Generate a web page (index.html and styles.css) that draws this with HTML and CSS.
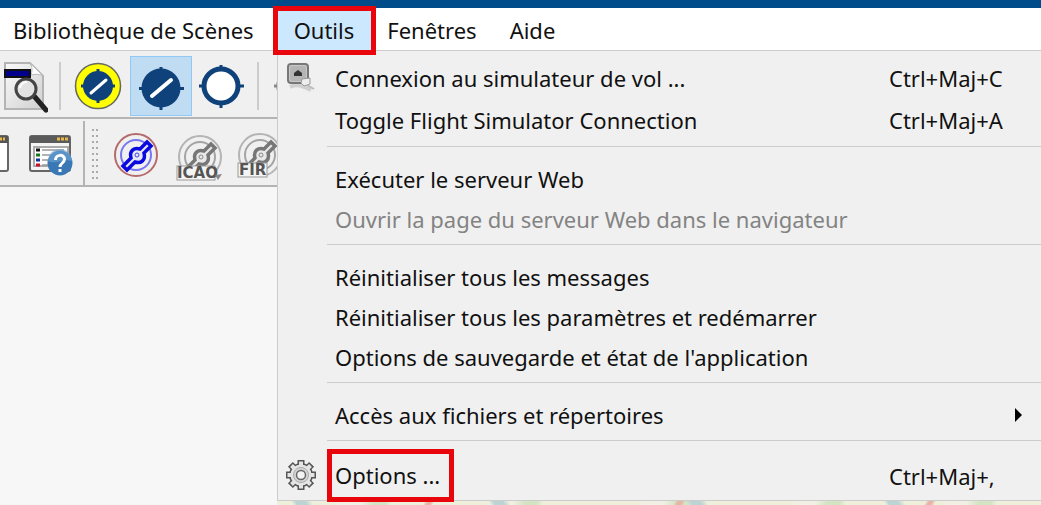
FILE: index.html
```
<!DOCTYPE html>
<html lang="fr">
<head>
  <meta charset="UTF-8">
  <title>Outils</title>
  <link rel="stylesheet" href="styles.css">
</head>
<body>
  <div class="titlebar"></div>

  <nav class="menubar">
    <button class="menu-title">Bibliothèque de Scènes</button>
    <button class="menu-title active marked">Outils</button>
    <button class="menu-title">Fenêtres</button>
    <button class="menu-title">Aide</button>
  </nav>

  <div class="workspace">
    <div class="toolbar">
      <button class="tool doc" aria-label="Rechercher">
        <svg width="48" height="56" viewBox="0 0 48 56">
          <defs>
            <linearGradient id="paper" x1="0" y1="0" x2="1" y2="1">
              <stop offset="0" stop-color="#fafafa"/><stop offset="1" stop-color="#d0d0d0"/>
            </linearGradient>
          </defs>
          <path d="M5 5h25l13 13v33H5z" fill="url(#paper)" stroke="#b4b4b4" stroke-width="2"/>
          <path d="M30 5c3 4 2 9 1 12 4-1 9-1 12 1z" fill="#fff" stroke="#bbb"/>
          <rect x="5" y="12" width="25" height="7" fill="#00008c" stroke="#111" stroke-width="2"/>
          <path d="M34 38l12 14" stroke="#222" stroke-width="5" stroke-linecap="round"/>
          <circle cx="26" cy="31" r="10" fill="#e2e2e2" fill-opacity=".9" stroke="#444" stroke-width="3"/>
          <path d="M20 30a7 7 0 0 1 7-6" stroke="#fff" stroke-width="2" fill="none"/>
        </svg>
      </button>
      <span class="separator"></span>
      <button class="tool" aria-label="Aéroports avec piste">
        <svg width="62" height="60" viewBox="0 0 62 60">
          <circle cx="30" cy="30" r="22.5" fill="#ff0" stroke="#646a5c" stroke-width="1.5"/>
          <path d="M30 13v34M13 30h34" stroke="#0f427a" stroke-width="3"/>
          <circle cx="30" cy="30" r="15" fill="#0f427a"/>
          <path d="M23 37L38 24" stroke="#fff" stroke-width="3" stroke-linecap="round"/>
        </svg>
      </button>
      <button class="tool pressed" aria-label="Aéroports en dur">
        <svg width="60" height="58" viewBox="0 0 60 58">
          <path d="M30 10v43M8 31.5h45" stroke="#0f427a" stroke-width="3"/>
          <circle cx="30" cy="31" r="19.5" fill="#0f427a"/>
          <path d="M21 39L40 23" stroke="#fff" stroke-width="4" stroke-linecap="round"/>
        </svg>
      </button>
      <button class="tool" aria-label="Aéroports sans piste">
        <svg width="60" height="60" viewBox="0 0 60 60">
          <path d="M29 9v43M7 30h45" stroke="#0f427a" stroke-width="3"/>
          <circle cx="29" cy="30" r="17" fill="#fff" stroke="#0f427a" stroke-width="5"/>
        </svg>
      </button>
      <span class="separator far"></span>
      <button class="tool" aria-label="Aérodromes">
        <svg width="60" height="60" viewBox="0 0 60 60">
          <path d="M13 30h5M17 26v8" stroke="#888" stroke-width="3"/>
          <circle cx="36" cy="30" r="17" fill="none" stroke="#888" stroke-width="4"/>
        </svg>
      </button>
    </div>

    <div class="toolbar">
      <button class="tool" aria-label="Fenêtre">
        <svg width="20" height="60" viewBox="0 0 20 60">
          <rect x="-30" y="12" width="38" height="35" rx="2" fill="#fff" stroke="#666" stroke-width="2"/>
          <path d="M0 12h8v7H0z" fill="#555"/>
          <path d="M0 15h6" stroke="#e8b848" stroke-width="3" stroke-dasharray="2 1"/>
        </svg>
      </button>
      <button class="tool" aria-label="Légende">
        <svg width="63" height="60" viewBox="0 0 63 60">
          <rect x="10" y="12" width="40" height="35" rx="2" fill="#f4f4f4" stroke="#666" stroke-width="2"/>
          <path d="M10 12h40v7H10z" fill="#5a5a5a"/>
          <path d="M37 15h12" stroke="#e8b848" stroke-width="3" stroke-dasharray="3 1"/>
          <path d="M14 23h34v19H14z" fill="#fff" stroke="#aaa" stroke-width="2"/>
          <path d="M22 26h22M22 31h20M22 36h13M22 41h8" stroke="#999" stroke-width="1.5"/>
          <path d="M16 26h4" stroke="#111" stroke-width="3"/>
          <path d="M16 31h4" stroke="#187818" stroke-width="3"/>
          <path d="M16 36h4" stroke="#10309c" stroke-width="3"/>
          <path d="M16 41h4" stroke="#c8102e" stroke-width="3"/>
          <circle cx="40" cy="39" r="12.5" fill="#3978b5"/>
          <path d="M28 37a12 12 0 0 1 24 0c-8-3-16 4-24 0" fill="#6fa5d6" opacity=".6"/>
          <path d="M35.500 36c0-6 9-6 9-1 0 4-4.500 4-4.500 8M40 45v3" fill="none" stroke="#fff" stroke-width="3"/>
        </svg>
      </button>
      <span class="divider"></span>
      <span class="grip"></span>
      <button class="tool" aria-label="Espaces aériens">
        <svg width="62" height="60" viewBox="0 0 62 60">
          <circle cx="30" cy="31" r="21" fill="none" stroke="#b56b6b" stroke-width="2"/>
          <circle cx="30" cy="31" r="15" fill="none" stroke="#7777f2" stroke-width="2"/>
          <path d="M17 42l8-8c-2-7 3-11 9-9l7-7 4 4-7 7c2 7-3 11-9 9l-8 8z" fill="#e6e6f5" stroke="#0a0ae0" stroke-width="3.5"/>
          <circle cx="31" cy="31" r="2" fill="none" stroke="#4040e8"/>
        </svg>
      </button>
      <button class="tool" aria-label="Espaces ICAO">
        <svg width="62" height="60" viewBox="0 0 62 60">
          <g id="grey-airspace">
            <circle cx="32" cy="33" r="21" fill="none" stroke="#b4b4b4" stroke-width="2"/>
            <circle cx="32" cy="33" r="15" fill="none" stroke="#a4a4a4" stroke-width="2"/>
            <path d="M19 44l8-8c-2-7 3-11 9-9l7-7 4 4-7 7c2 7-3 11-9 9l-8 8z" fill="#e8e8e8" stroke="#777" stroke-width="3.5"/>
            <circle cx="33" cy="33" r="2" fill="none" stroke="#888"/>
          </g>
          <rect x="9" y="42" width="38" height="14" fill="#f4f4f4" stroke="#999"/>
          <text x="9" y="54" class="tag">ICAO</text>
          <path d="M47 51l3 5 4-6" fill="#888"/>
        </svg>
      </button>
      <button class="tool" aria-label="Espaces FIR">
        <svg width="62" height="60" viewBox="0 0 62 60">
          <use href="#grey-airspace" x="-2" y="-2"/>
          <rect x="8" y="39" width="29" height="14" fill="#f4f4f4" stroke="#999"/>
          <text x="9" y="51" class="tag">FIR</text>
        </svg>
      </button>
    </div>

    <div class="map"></div>

    <div class="menu" role="menu">
      <button class="item tall" role="menuitem">
        <svg width="32" height="34" viewBox="0 0 32 34">
          <path d="M5 26c8-4 14 0 21 3" stroke="#d0d0d0" stroke-width="4" fill="none"/>
          <rect x="3" y="3" width="20" height="19" rx="3" fill="#c8c8c8" stroke="#777" stroke-width="2"/>
          <rect x="5" y="5" width="16" height="15" rx="2" fill="#b4b4b4"/>
          <path d="M9 12l4-3 4 3v3H9z" fill="#333"/>
          <path d="M17 18l8-1v6l-6 2-3-3z" fill="#eee" stroke="#999"/>
          <path d="M22 24l7 4" stroke="#bbb" stroke-width="2"/>
        </svg>
        <span class="label">Connexion au simulateur de vol ...</span>
        <span class="shortcut">Ctrl+Maj+C</span>
      </button>
      <button class="item tall" role="menuitem">
        <span class="label">Toggle Flight Simulator Connection</span>
        <span class="shortcut">Ctrl+Maj+A</span>
      </button>
      <hr>
      <button class="item" role="menuitem"><span class="label">Exécuter le serveur Web</span></button>
      <button class="item" role="menuitem" disabled><span class="label">Ouvrir la page du serveur Web dans le navigateur</span></button>
      <hr>
      <button class="item" role="menuitem"><span class="label">Réinitialiser tous les messages</span></button>
      <button class="item" role="menuitem"><span class="label">Réinitialiser tous les paramètres et redémarrer</span></button>
      <button class="item" role="menuitem"><span class="label">Options de sauvegarde et état de l'application</span></button>
      <hr>
      <button class="item" role="menuitem">
        <span class="label">Accès aux fichiers et répertoires</span>
        <span class="arrow"></span>
      </button>
      <hr>
      <button class="item tall" role="menuitem">
        <svg width="32" height="34" viewBox="-16 -16 32 34">
          <path d="M0-15V15M-15 0H15M-10.600-10.600L10.600 10.600M-10.600 10.600L10.600-10.600" stroke="#555" stroke-width="7"/>
          <circle r="12" fill="#555"/>
          <path d="M0-13.500V13.500M-13.500 0H13.500M-9.500-9.500L9.500 9.500M-9.500 9.500L9.500-9.500" stroke="#e4e4e4" stroke-width="4"/>
          <circle r="10.500" fill="#e4e4e4"/>
          <circle r="7.500" fill="#d6d6d6" stroke="#aaa"/>
          <circle r="4.500" fill="#f4f4f4" stroke="#666" stroke-width="1.500"/>
        </svg>
        <span class="label marked">Options ...</span>
        <span class="shortcut">Ctrl+Maj+,</span>
      </button>
    </div>
  </div>
</body>
</html>
```
FILE: styles.css
```
* {
  box-sizing: border-box;
}
body {
  margin: 0;
  height: 100vh;
  display: flex;
  flex-direction: column;
  overflow: hidden;
  background-color: #f7f7f7;
  font-family: 'Segoe UI', 'Noto Sans', sans-serif;
  font-size: 22px;
  color: #111;
}
button {
  font: inherit;
  color: inherit;
  background: none;
  border: none;
  padding: 0;
  white-space: nowrap;
}
svg {
  display: block;
  flex: none;
}
.titlebar {
  height: 8px;
  flex: none;
  background-color: #004c8a;
}
.menubar {
  display: flex;
  flex: none;
  height: 43px;
  padding-top: 3px;
  background-color: #fff;
  border-bottom: 1px solid #ccc;
  position: relative;
  z-index: 3;
}
.menu-title {
  padding: 0 17px 0 16px;
  line-height: 39px;
}
.menu-title:first-child {
  padding: 0 24px 0 13px;
}
.menu-title.active {
  background-color: #cce8ff;
}
/* red frames around the entries to click */
.marked {
  position: relative;
}
.marked::after {
  content: "";
  position: absolute;
  inset: -5px;
  border: 5px solid #e8060c;
}
.workspace {
  flex: 1;
  display: flex;
  flex-direction: column;
  position: relative;
}
.toolbar {
  display: flex;
  flex: none;
  align-items: center;
  height: 68px;
  padding-top: 3px;
  background-color: #f0f0f0;
  border-bottom: 2px solid #b4b4b4;
}
.tool {
  flex: none;
}
.pressed {
  background-color: #c0dcf3;
  border: 1px solid #90c8f6;
}
.separator {
  width: 2px;
  height: 48px;
  flex: none;
  margin: 0 7px 0 11px;
  background-color: #ccc;
}
.separator.far {
  margin: 0 2px 0 5px;
}
.divider {
  width: 2px;
  height: 66px;
  background-color: #b4b4b4;
}
.grip {
  width: 8px;
  height: 54px;
  margin: 0 7px 0 6px;
  background-image: radial-gradient(circle, #aaa 1px, transparent 1px);
  background-size: 4px 6px;
}
.tag {
  font: bold 15px 'DejaVu Sans', sans-serif;
  fill: #555;
}
.map {
  margin: auto 0 0 277px;
  height: 8px;
  background:
    repeating-linear-gradient(120deg, transparent 0 130px, #e9b4a6 133px 136px, transparent 139px 217px),
    repeating-linear-gradient(60deg, transparent 0 14px, #bcd4d4 18px 26px, transparent 32px 171px),
    repeating-linear-gradient(100deg, #eef0dc 0 60px, #f2efe4 66px 84px, #d3e4c2 96px 108px, #eef0dc 114px 149px);
}
.menu {
  position: absolute;
  top: 0;
  left: 277px;
  right: 0;
  z-index: 2;
  padding: 7px 0 4px;
  background-color: #f0f0f0;
  border: 1px solid #ccc;
  border-width: 0 0 1px 1px;
}
.item {
  display: grid;
  grid-template-columns: 49px 1fr 152px;
  align-items: center;
  width: 100%;
  height: 40px;
  padding-bottom: 2px;
  text-align: left;
}
.item.tall {
  height: 42px;
}
.item svg {
  margin-left: 7px;
}
.item:disabled {
  color: #838383;
}
.label {
  grid-column: 2;
  justify-self: start;
  padding: 0 8px;
  line-height: 38px;
}
.label.marked {
  line-height: 43px;
  padding-right: 14px;
}
.label.marked::after {
  inset: -5px 0;
}
.shortcut {
  grid-column: 3;
}
.arrow {
  grid-column: 3;
  margin-left: 126px;
  width: 0;
  border: 7px solid transparent;
  border-left-color: #000;
  border-right-width: 0;
}
hr {
  margin: 4px 0 13px 49px;
  border: none;
  border-top: 1px solid #ccc;
}
```
